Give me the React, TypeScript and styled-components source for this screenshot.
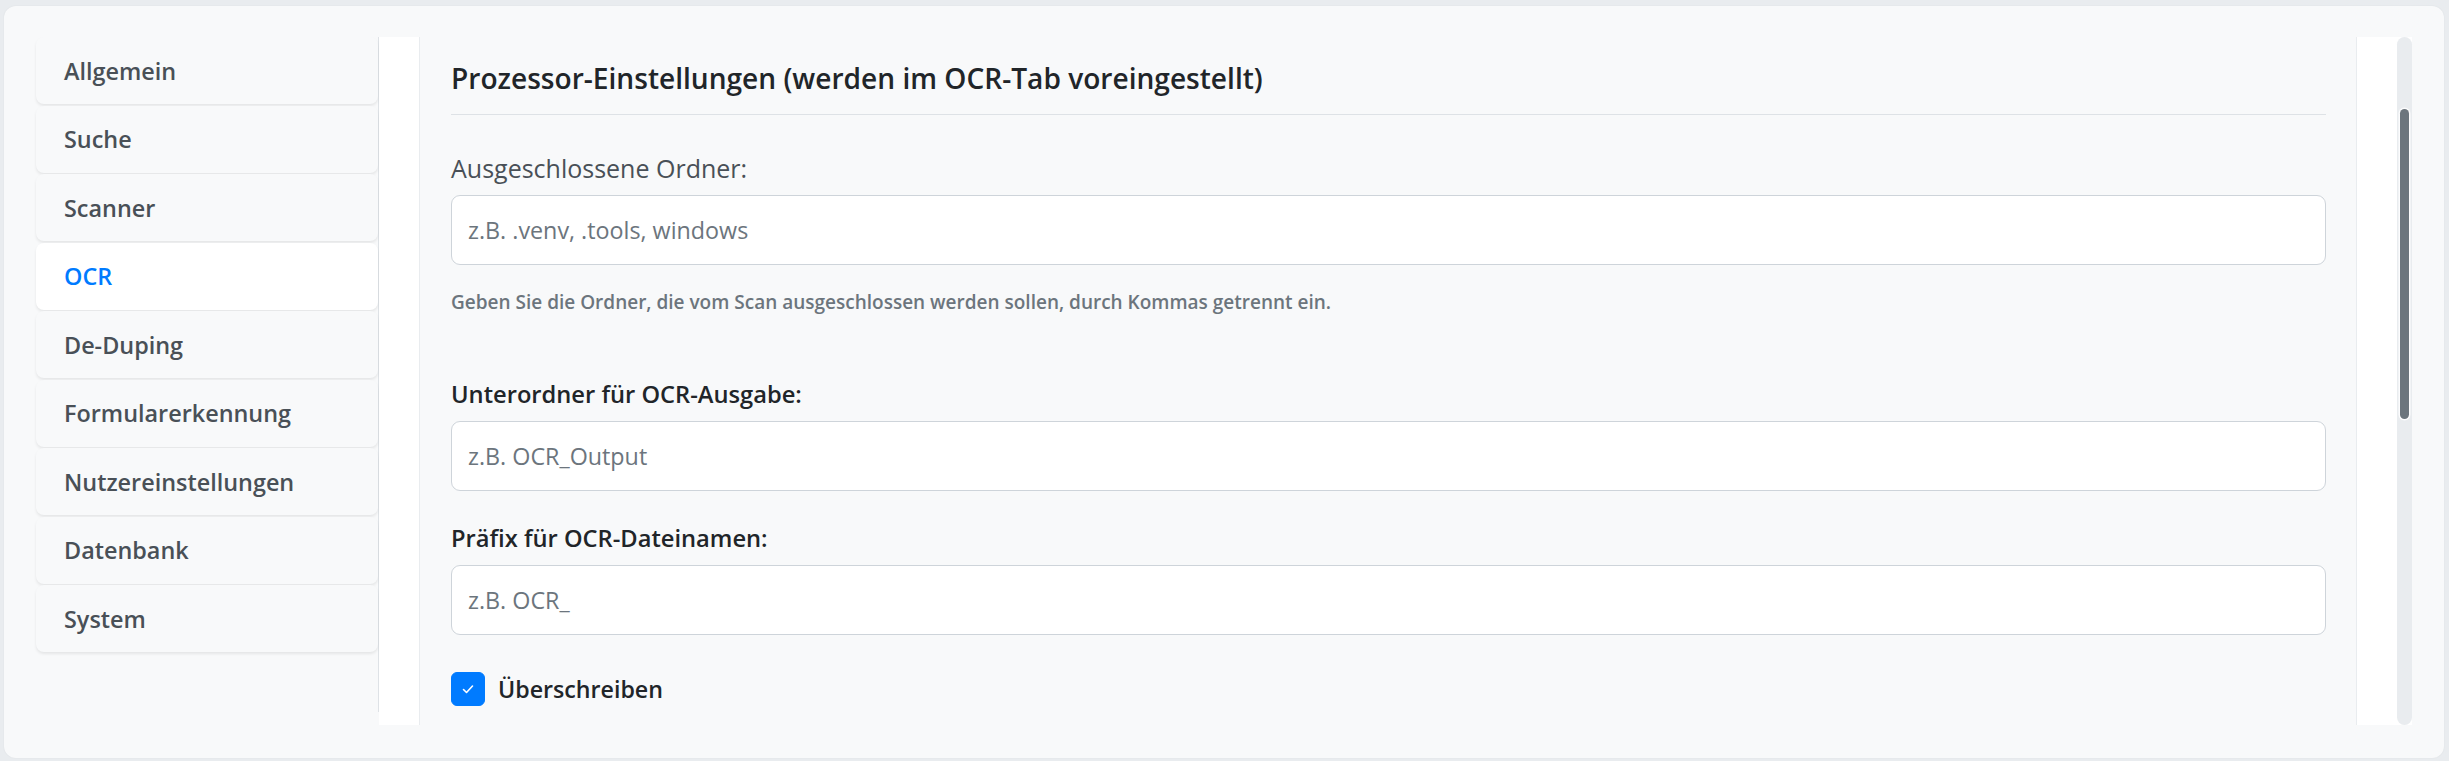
import React, { useState } from "react";
import styled, { createGlobalStyle } from "styled-components";

const TABS = [
  "Allgemein",
  "Suche",
  "Scanner",
  "OCR",
  "De-Duping",
  "Formularerkennung",
  "Nutzereinstellungen",
  "Datenbank",
  "System",
];

const App: React.FC = () => {
  const [active, setActive] = useState<string>("OCR");
  const [overwrite, setOverwrite] = useState<boolean>(true);

  return (
    <Page>
      <GlobalStyle />
      <Panel>
        <Sidebar>
          {TABS.map((tab) => (
            <Tab key={tab} $active={tab === active} onClick={() => setActive(tab)}>
              {tab}
            </Tab>
          ))}
        </Sidebar>
        <Pane>
          <Card>
            <Heading>Prozessor-Einstellungen (werden im OCR-Tab voreingestellt)</Heading>
            <Label $muted $top={35}>Ausgeschlossene Ordner:</Label>
            <Input placeholder="z.B. .venv, .tools, windows" />
            <Help>
              Geben Sie die Ordner, die vom Scan ausgeschlossen werden sollen, durch Kommas getrennt ein.
            </Help>
            <Label $top={59}>Unterordner für OCR-Ausgabe:</Label>
            <Input placeholder="z.B. OCR_Output" />
            <Label $top={29}>Präfix für OCR-Dateinamen:</Label>
            <Input placeholder="z.B. OCR_" />
            <CheckRow onClick={() => setOverwrite(!overwrite)}>
              <CheckBox $checked={overwrite}>
                {overwrite && (
                  <svg width="16" height="16" viewBox="0 0 16 16" fill="none">
                    <path d="M3.5 8.5l3 3 6-6.5" stroke="#fff" strokeWidth="1.6" strokeLinecap="round" strokeLinejoin="round" />
                  </svg>
                )}
              </CheckBox>
              <CheckLabel>Überschreiben</CheckLabel>
            </CheckRow>
          </Card>
          <ScrollTrack>
            <ScrollThumb />
          </ScrollTrack>
        </Pane>
      </Panel>
    </Page>
  );
};

export default App;

const GlobalStyle = createGlobalStyle`
  html, body {
    margin: 0;
    padding: 0;
    background: #e9ecef;
  }
  body {
    font-family: "Open Sans", "Noto Sans", sans-serif;
  }
  * {
    box-sizing: border-box;
  }
`;

const Page = styled.div`
  width: 2449px;
  height: 761px;
  padding: 6px 5px 3px 4px;
  overflow: hidden;
`;

const Panel = styled.div`
  height: 752px;
  background: #f8f9fa;
  border-radius: 12px;
  padding: 31px 32px 0 32px;
  display: flex;
  align-items: flex-start;
  box-shadow: 0 0 2px rgba(0, 0, 0, 0.06);
`;

const Sidebar = styled.nav`
  width: 343px;
  height: 675px;
  flex-shrink: 0;
  border-right: 1px solid #dee2e6;
  display: flex;
  flex-direction: column;
  gap: 1.5px;
`;

const Tab = styled.div<{ $active?: boolean }>`
  height: 67px;
  padding-left: 28px;
  display: flex;
  align-items: center;
  font-size: 23.4px;
  font-weight: 600;
  color: ${(p) => (p.$active ? "#007bff" : "#495057")};
  background: ${(p) => (p.$active ? "#ffffff" : "#f8f9fa")};
  border-radius: 8px;
  box-shadow: 0 2px 3px rgba(0, 0, 0, 0.08);
  cursor: pointer;
`;

const Pane = styled.div`
  flex: 1;
  height: 688px;
  background: #ffffff;
  display: flex;
  padding-left: 40px;
  gap: 40px;
`;

const Card = styled.div`
  flex: 1;
  background: #f8f9fa;
  border-left: 1px solid #e9ecef;
  border-right: 1px solid #e9ecef;
  padding: 0 30px 0 31px;
  overflow: hidden;
  display: flex;
  flex-direction: column;
`;

const Heading = styled.h5`
  margin: 23px 0 0 0;
  padding-bottom: 17px;
  border-bottom: 1px solid #dee2e6;
  font-size: 28.1px;
  line-height: 37px;
  font-weight: 600;
  color: #212529;
`;

const Label = styled.label<{ $muted?: boolean; $top: number }>`
  display: block;
  margin-top: ${(p) => p.$top}px;
  margin-bottom: 7.5px;
  font-size: ${(p) => (p.$muted ? "25px" : "23.7px")};
  line-height: 37.5px;
  font-weight: ${(p) => (p.$muted ? 500 : 600)};
  color: ${(p) => (p.$muted ? "#495057" : "#212529")};
`;

const Input = styled.input`
  height: 70px;
  width: 100%;
  padding: 0 16px;
  background: #ffffff;
  border: 1px solid #ced4da;
  border-radius: 9px;
  font-family: inherit;
  font-size: 23.3px;
  color: #495057;
  outline: none;
  &::placeholder {
    color: #6c757d;
  }
`;

const Help = styled.small`
  display: block;
  margin-top: 22px;
  font-size: 19px;
  line-height: 30px;
  font-weight: 600;
  color: #6c757d;
`;

const CheckRow = styled.div`
  display: flex;
  align-items: center;
  gap: 13px;
  margin-top: 36.5px;
  cursor: pointer;
`;

const CheckBox = styled.span<{ $checked?: boolean }>`
  width: 34px;
  height: 34px;
  border-radius: 6px;
  display: flex;
  align-items: center;
  justify-content: center;
  background: ${(p) => (p.$checked ? "#007bff" : "#ffffff")};
  border: 1px solid ${(p) => (p.$checked ? "#007bff" : "#ced4da")};
`;

const CheckLabel = styled.span`
  font-size: 23.2px;
  line-height: 34px;
  font-weight: 600;
  color: #212529;
`;

const ScrollTrack = styled.div`
  width: 15px;
  flex-shrink: 0;
  background: #e9ecef;
  border-radius: 8px;
  padding: 72px 3px 0 3px;
`;

const ScrollThumb = styled.div`
  height: 310px;
  background: #6c757d;
  border-radius: 5px;
  box-shadow: 0 0 0 1.5px rgba(255, 255, 255, 0.85);
`;
